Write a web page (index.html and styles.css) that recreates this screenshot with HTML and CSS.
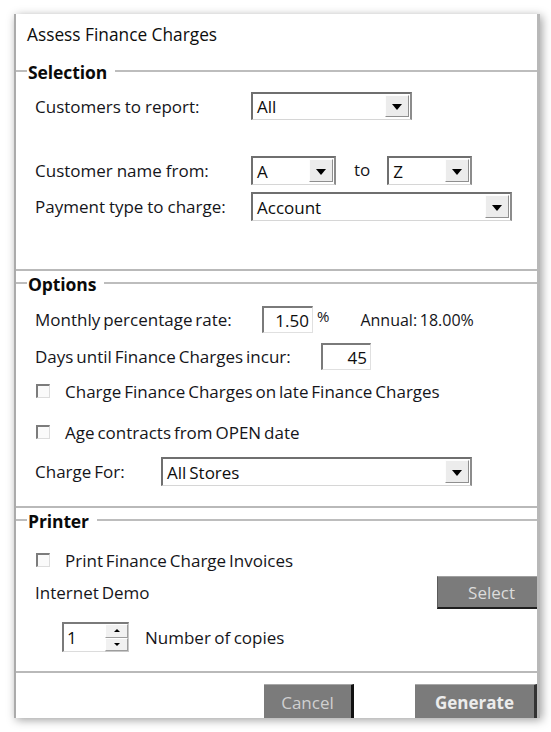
FILE: index.html
```html
<!DOCTYPE html>
<html>
<head>
<meta charset="utf-8">
<link rel="stylesheet" href="styles.css">
</head>
<body>
<div class="dialog">
  <div class="title">Assess Finance Charges</div>

  <section class="group g-sel">
    <div class="legend"><span>Selection</span></div>
    <div class="row r-cust">
      <span class="lbl lbl-sel">Customers to report:</span>
      <div class="combo w-all"><span class="val">All</span><span class="dd"></span></div>
    </div>
    <div class="row r-name">
      <span class="lbl lbl-sel">Customer name from:</span>
      <div class="combo w-az"><span class="val">A</span><span class="dd"></span></div>
      <span class="to">to</span>
      <div class="combo w-az"><span class="val">Z</span><span class="dd"></span></div>
    </div>
    <div class="row r-pay">
      <span class="lbl lbl-sel">Payment type to charge:</span>
      <div class="combo w-pay"><span class="val">Account</span><span class="dd"></span></div>
    </div>
  </section>

  <section class="group g-opt">
    <div class="legend"><span>Options</span></div>
    <div class="row r-rate">
      <span class="lbl lbl-rate">Monthly percentage rate:</span>
      <div class="tbox w-rate">1.50</div>
      <span class="pct">%</span>
      <span class="annual">Annual: 18.00%</span>
    </div>
    <div class="row r-days">
      <span class="lbl lbl-days">Days until Finance Charges incur:</span>
      <div class="tbox w-days">45</div>
    </div>
    <div class="row r-chk1">
      <span class="chk"></span><span class="chk-lbl">Charge Finance Charges on late Finance Charges</span>
    </div>
    <div class="row r-chk2">
      <span class="chk"></span><span class="chk-lbl">Age contracts from OPEN date</span>
    </div>
    <div class="row r-for">
      <span class="lbl lbl-for">Charge For:</span>
      <div class="combo w-for"><span class="val">All Stores</span><span class="dd"></span></div>
    </div>
  </section>

  <section class="group g-prn">
    <div class="legend"><span>Printer</span></div>
    <div class="row r-chk3">
      <span class="chk"></span><span class="chk-lbl">Print Finance Charge Invoices</span>
    </div>
    <div class="row r-demo">
      <span class="lbl">Internet Demo</span>
      <button class="btn btn-select">Select</button>
    </div>
    <div class="row r-copies">
      <div class="spin">
        <div class="spin-val">1</div>
        <div class="spin-btns">
          <span class="sb sb-up"></span>
          <span class="sb sb-down"></span>
        </div>
      </div>
      <span class="copies">Number of copies</span>
    </div>
  </section>

  <div class="actions">
    <button class="btn btn-cancel">Cancel</button>
    <button class="btn btn-gen">Generate</button>
  </div>
</div>
</body>
</html>
```

FILE: styles.css
```css
* { box-sizing: border-box; }

html, body {
  margin: 0;
  padding: 0;
  background: #ffffff;
}

body {
  font-family: "Open Sans", "Noto Sans", sans-serif;
  font-size: 17px;
  word-spacing: -1.5px;
  color: #15151a;
  width: 551px;
  height: 732px;
  overflow: hidden;
}

.dialog {
  margin: 14px 0 0 14px;
  width: 526px;
  height: 704px;
  background: #fff;
  border-left: 2px solid #ababab;
  border-right: 3px solid #b8b8b8;
  box-shadow: 2px 2px 9px rgba(0, 0, 0, 0.38);
  overflow: hidden;
  display: flex;
  flex-direction: column;
}

.title {
  height: 47px;
  padding: 10px 0 0 11px;
  line-height: 22px;
  font-size: 17.3px;
  word-spacing: 0;
  color: #0d0d0d;
}

/* group boxes */
.group {
  border-bottom: 2px solid #b9b9b9;
}

.legend {
  height: 20px;
  display: flex;
  align-items: center;
}
.legend::before {
  content: "";
  width: 11px;
  height: 2px;
  background: #bdbdbd;
  margin-right: 1px;
}
.legend::after {
  content: "";
  flex: 1;
  height: 2px;
  background: #bdbdbd;
  margin-left: 8px;
}
.legend span {
  font-weight: 700;
  font-size: 17.5px;
  color: #0a0a0a;
  line-height: 20px;
  padding-top: 2px;
  letter-spacing: -0.1px;
}

.g-sel { padding-bottom: 48px; }
.g-opt { margin-top: 2px; padding-bottom: 20px; }
.g-prn { margin-top: 2px; padding-bottom: 19px; }

.row {
  display: flex;
  align-items: center;
  padding-left: 19px;
}

.lbl { white-space: nowrap; }
.lbl-sel { width: 216px; word-spacing: -0.5px; }
.lbl-rate { width: 227px; }
.lbl-days { width: 286px; }
.lbl-for { width: 126px; }

.r-cust { margin-top: 11px; height: 28px; }
.r-name { margin-top: 36px; height: 29px; }
.r-pay { margin-top: 7px; height: 29px; }

.r-rate { margin-top: 13px; height: 27px; }
.r-days { margin-top: 10px; height: 27px; }
.r-chk1 { margin-top: 11px; height: 20px; padding-left: 20px; }
.r-chk2 { margin-top: 21px; height: 20px; padding-left: 20px; }
.r-for { margin-top: 15px; height: 29px; }

.r-chk3 { margin-top: 20px; height: 20px; padding-left: 20px; }
.r-demo { margin-top: 6px; height: 33px; justify-content: space-between; }
.r-copies { margin-top: 13px; height: 30px; padding-left: 46px; }

/* combo boxes */
.combo {
  height: 100%;
  display: flex;
  align-items: stretch;
  border-top: 2px solid #6f6f6f;
  border-left: 2px solid #6f6f6f;
  border-right: 2px solid #8c8c8c;
  border-bottom: 1px solid #d6d6d6;
  background: #fff;
}
.combo .val {
  flex: 1;
  padding-left: 4px;
  display: flex;
  align-items: center;
  color: #0d0d0d;
}
.combo .dd {
  width: 24px;
  margin: 1px 1px 2px 0;
  background: #ececec;
  border-top: 1px solid #fdfdfd;
  border-left: 1px solid #fdfdfd;
  border-right: 1px solid #8f8f8f;
  border-bottom: 1px solid #8f8f8f;
  position: relative;
}
.combo .dd::after {
  content: "";
  position: absolute;
  left: 50%;
  top: 50%;
  margin-left: -5px;
  margin-top: -2px;
  border-left: 5px solid transparent;
  border-right: 5px solid transparent;
  border-top: 6px solid #000;
}
.w-all { width: 161px; }
.w-az { width: 85px; }
.w-pay { width: 261px; }
.w-for { width: 311px; }

.to {
  margin: 0 17px 0 18px;
  position: relative;
  top: -1px;
}

/* text boxes */
.tbox {
  height: 100%;
  border-top: 2px solid #7a7a7a;
  border-left: 2px solid #7a7a7a;
  border-right: 1px solid #e0e0e0;
  border-bottom: 1px solid #e0e0e0;
  display: flex;
  align-items: center;
  justify-content: flex-end;
  padding-right: 3px;
  color: #0d0d0d;
}
.w-rate { width: 51px; }
.w-days { width: 50px; }

.pct {
  font-size: 15px;
  margin-left: 4px;
  position: relative;
  top: -4px;
}
.annual {
  font-size: 16px;
  margin-left: 31px;
}

/* checkboxes */
.chk {
  width: 14px;
  height: 14px;
  border-top: 2px solid #7c7c7c;
  border-left: 2px solid #7c7c7c;
  border-right: 1px solid #dcdcdc;
  border-bottom: 1px solid #dcdcdc;
  background: #fafafa;
  flex: none;
}
.chk-lbl {
  margin-left: 15px;
  white-space: nowrap;
}

/* buttons */
.btn {
  font-family: "Open Sans", "Noto Sans", sans-serif;
  font-size: 17px;
  background: #7b7b7b;
  color: #d4d4d4;
  border: none;
  padding: 0;
  margin: 0;
}
.btn-select {
  width: 100px;
  height: 33px;
  border-top: 1px solid #a0a0a0;
  border-bottom: 2px solid #1e1e1e;
  border-left: 1px solid #5a5a5a;
  text-align: right;
  padding-right: 22px;
  color: #dcdcdc;
}

/* spinner */
.spin {
  display: flex;
  height: 100%;
}
.spin-val {
  width: 43px;
  border-top: 2px solid #7a7a7a;
  border-left: 2px solid #7a7a7a;
  border-bottom: 1px solid #dcdcdc;
  padding-left: 3px;
  display: flex;
  align-items: center;
  color: #0d0d0d;
}
.spin-btns {
  width: 24px;
  display: flex;
  flex-direction: column;
  border-top: 2px solid #7a7a7a;
  border-right: 1px solid #c8c8c8;
  border-bottom: 1px solid #c8c8c8;
}
.sb {
  flex: 1;
  background: #f1f1f1;
  border: 1px solid #9d9d9d;
  border-top-color: #fff;
  border-left-color: #fff;
  position: relative;
}
.sb::after {
  content: "";
  position: absolute;
  left: 50%;
  top: 50%;
  margin-left: -3px;
  border-left: 3px solid transparent;
  border-right: 3px solid transparent;
}
.sb-up::after {
  margin-top: -2px;
  border-bottom: 3px solid #000;
}
.sb-down::after {
  margin-top: -1px;
  border-top: 3px solid #000;
}
.copies {
  margin-left: 16px;
  word-spacing: -1px;
}

/* action buttons */
.actions {
  margin-top: 11px;
  display: flex;
  justify-content: flex-end;
  gap: 61px;
  height: 33px;
}
.btn-cancel {
  width: 90px;
  height: 36px;
  border-top: 1px solid #a8a8a8;
  border-right: 3px solid #111;
  color: #d0d0d0;
}
.btn-gen {
  width: 122px;
  height: 36px;
  border-top: 1px solid #a8a8a8;
  border-right: 3px solid #333;
  font-weight: 700;
  color: #ececec;
}
```
